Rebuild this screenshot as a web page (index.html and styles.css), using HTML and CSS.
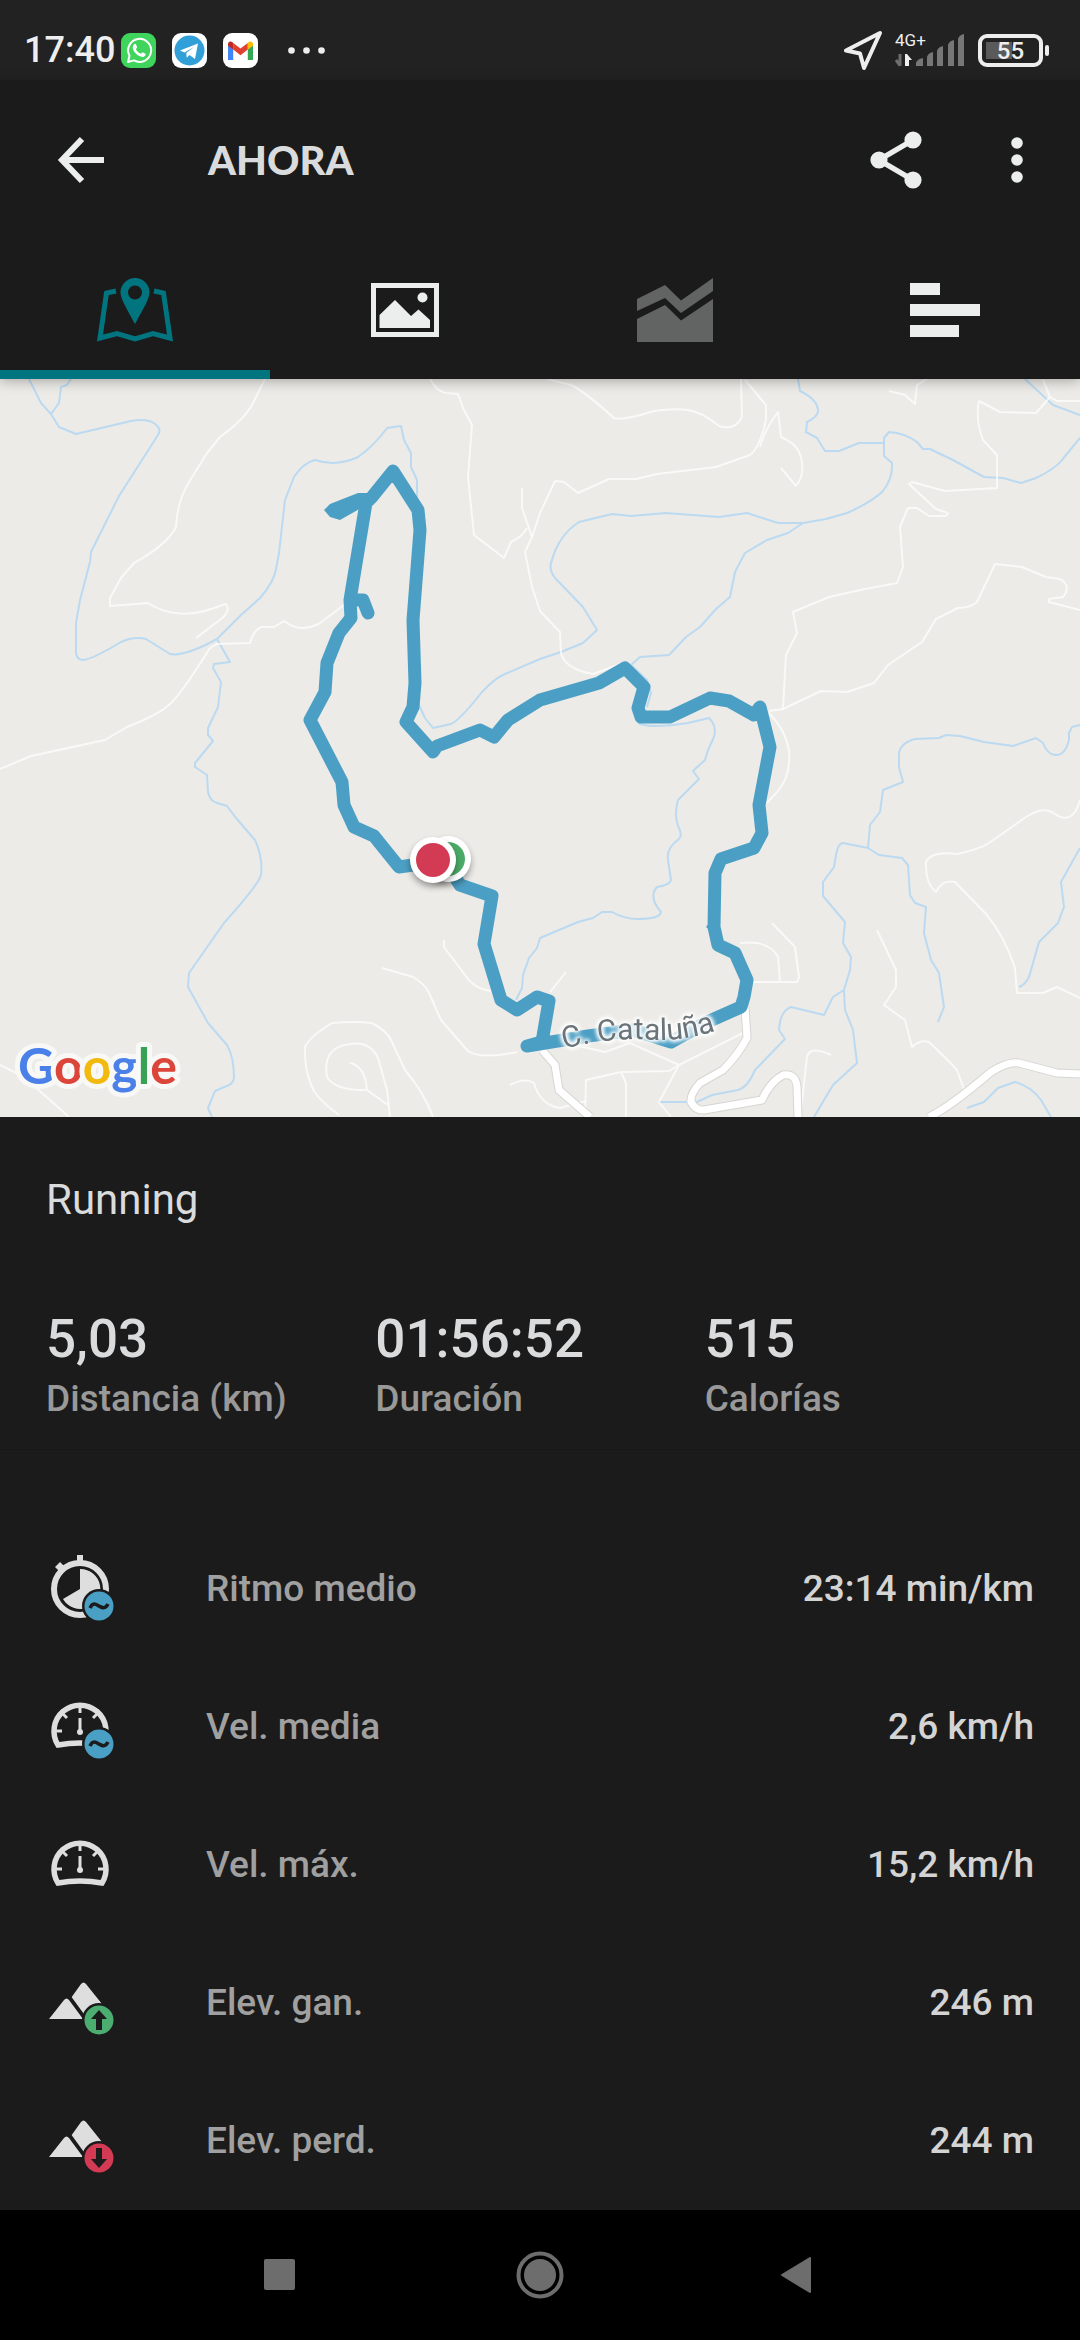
FILE: index.html
```html
<!DOCTYPE html>
<html lang="es">
<head>
  <meta charset="UTF-8" />
  <meta name="viewport" content="width=device-width, initial-scale=1">
  <title>Ahora - Running</title>
  <link rel="stylesheet" href="styles.css">
</head>
<body>

  <div class="status-bar">
    <span class="clock">17:40</span>
    <div class="notifications">
      <svg width="35" height="35" viewBox="0 0 35 35">
        <rect width="35" height="35" rx="9" fill="#3fd45c"/>
        <path d="M7 29l1.500-6.200A11.500 11.500 0 1 1 13 27.400z" fill="none" stroke="#fff" stroke-width="2" stroke-linejoin="round"/>
        <path d="M12.500 12c1-1.500 2-1.500 2.600-.3l1 2.400c.2.800-1.300 1.600-1 2.300 1 2 2.600 3.400 4.600 4.200.8.300 1.500-1.500 2.300-1.200l2.500 1.300c.8.600-.6 3-2.500 3.200-4.500.3-10.600-5.400-10.300-9.600.1-1 .4-1.700.8-2.300z" fill="#fff"/>
      </svg>
      <svg width="35" height="35" viewBox="0 0 35 35">
        <rect width="35" height="35" rx="9" fill="#fff"/>
        <circle cx="17.500" cy="17.500" r="15" fill="#32a0d8"/>
        <path d="M8 17.500L26 10.500l-3 15.500-5.500-4-2.800 2.700-.4-4.700L22 14l-9.500 5.500z" fill="#fff"/>
      </svg>
      <svg width="35" height="35" viewBox="0 0 35 35">
        <rect width="35" height="35" rx="9" fill="#fff"/>
        <path d="M5 12v15h5.200V16z" fill="#4285f4"/>
        <path d="M30 12v15h-5.200V16z" fill="#34a853"/>
        <path d="M10.200 10l7.300 5.500 7.300-5.500v6.600l-7.300 5.600-7.300-5.600z" fill="#e0402f"/>
        <path d="M5 12c-.3-4 3.300-4.500 5.200-2v6.600L5 12.700z" fill="#bc2a22"/>
        <path d="M30 12c.3-4-3.300-4.500-5.200-2v6.600l5.200-3.900z" fill="#fbbc04"/>
      </svg>
      <svg class="more-dots" width="37" height="7" viewBox="0 0 37 7">
        <circle cx="3.500" cy="3.500" r="3.300"/><circle cx="18.500" cy="3.500" r="3.300"/><circle cx="33.500" cy="3.500" r="3.300"/>
      </svg>
    </div>
    <div class="system">
      <svg width="40" height="40" viewBox="0 0 40 40">
        <path d="M3 20.500L37 3 21 38 17 23.500z" fill="none" stroke="#eee" stroke-width="4" stroke-linejoin="round"/>
      </svg>
      <div class="signal">
        <span class="network">4G+</span>
        <svg width="71" height="36" viewBox="0 0 71 36">
          <path d="M5 22v12M1 28l4 5.500" stroke="#6d6d6d" stroke-width="3" fill="none"/>
          <path d="M10 22h2l5 6h-3v6h-4z" fill="#eee"/>
          <path d="M21 31q1-4 7-5v8h-7zM32 25q1-4 6-5v14h-6zM42 19q1-4 6-5v20h-6zM53 13q1-4 6-5v26h-6zM63 7q1-4 6-5v32h-6z" fill="#777"/>
        </svg>
      </div>
      <div class="battery"><span>55</span></div>
    </div>
  </div>

  <header>
    <div class="app-bar">
      <button class="icon-btn" aria-label="Volver">
        <svg width="52" height="52" viewBox="0 0 52 52"><path d="M50 26H8M28 5L8 26l20 21" fill="none" stroke="#eceded" stroke-width="6"/></svg>
      </button>
      <h1>AHORA</h1>
      <button class="icon-btn" aria-label="Compartir">
        <svg width="52" height="60" viewBox="0 0 52 60">
          <path d="M43 10L9 30l34 20" fill="none" stroke="#eceded" stroke-width="5.500"/>
          <g fill="#eceded"><circle cx="43" cy="10" r="8.600"/><circle cx="9" cy="30" r="8.600"/><circle cx="43" cy="50" r="8.600"/></g>
        </svg>
      </button>
      <button class="icon-btn" aria-label="Más opciones">
        <svg width="12" height="48" viewBox="0 0 12 48"><g fill="#eceded"><circle cx="6" cy="7" r="5.800"/><circle cx="6" cy="24" r="5.800"/><circle cx="6" cy="41" r="5.800"/></g></svg>
      </button>
    </div>

    <nav class="tabs">
      <button class="tab active" aria-label="Mapa">
        <svg width="78" height="66" viewBox="0 0 78 66">
          <path d="M20 14l-9.500 2L4 61l17-4.500L39 62l18-5.500L74 61 67.500 16l-9.500-2" fill="none" stroke="#00757f" stroke-width="5"/>
          <path fill-rule="evenodd" d="M39 1a14.500 14.500 0 0 0-14.500 14.500C24.500 22 32 34 39 47c7-13 14.500-25 14.500-31.500A14.500 14.500 0 0 0 39 1zm0 7.500a7 7 0 1 1 0 14 7 7 0 0 1 0-14z" fill="#00757f"/>
        </svg>
      </button>
      <button class="tab" aria-label="Fotos">
        <svg width="68" height="54" viewBox="0 0 68 54">
          <rect x="2.500" y="2.500" width="63" height="49" fill="none" stroke="#eceded" stroke-width="5"/>
          <path d="M8.500 45V32L24 17l16 16 7.500-6.500L59 37v8z" fill="#eceded"/>
          <circle cx="51.500" cy="14.500" r="5" fill="#eceded"/>
        </svg>
      </button>
      <button class="tab" aria-label="Gráficas">
        <svg width="76" height="64" viewBox="0 0 76 64"><path d="M0 21L28 7l16 15.500L76 0v13L44 35 28 20 0 33zM0 41l28-14 16 15.500L76 21v43H0z" fill="#626463"/></svg>
      </button>
      <button class="tab" aria-label="Parciales">
        <svg width="70" height="54" viewBox="0 0 70 54"><path d="M0 0h30v12H0zM0 21h70v12H0zM0 42h49v12H0z" fill="#eceded"/></svg>
      </button>
    </nav>
  </header>

  <main>
    <svg class="map" viewBox="0 0 1080 738" role="img" aria-label="Mapa de la ruta">
      <!-- rivers -->
      <g class="river">
        <path d="M29 0L41 24 51 35 59 48 76 55 131 42Q148 39 155 45 162 50 158 56L119 117 91 173 90 183 80 221 76 244V274Q77 281 83 281 93 280 121 263 134 257 146 260L170 275Q184 278 217 260L241 236 260 219Q274 203 276 190L279 174 285 121 294 98Q303 84 315 81 336 88 358 78 374 67 387 49L401 47 404 61 411 74V88L417 101V121"/>
        <path d="M71 0L67 6 61 8 59 24 51 35"/>
        <path d="M217 260L230 283 214 285 213 289 221 303 218 328 208 349V356L213 362 195 384V388L207 396 208 413Q210 422 217 424L227 427 236 439 255 461Q263 478 261 496 259 505 224 544L189 594 188 608 208 644 227 666Q234 678 234 699 233 704 229 706L215 712 208 729 212 738"/>
        <path d="M418 324L425 339 433 349 451 345Q460 341 482 313 495 299 505 295L540 280 561 273 583 264 597 251 583 228 555 199Q548 190 552 181 559 156 579 143L612 135 631 137 666 134 719 138 747 134 778 144H803L826 140 847 134Q872 123 883 112 893 99 892 84L884 77V59L889 53Q905 54 917 63L923 70H930L953 81 984 98 1003 99 1021 104 1036 99Q1055 90 1062 81L1080 59"/>
        <path d="M803 144L788 154 767 161 745 174 735 193 730 218 716 230 700 248 686 258 669 276 640 278 631 286 647 301 651 314 647 328"/>
        <path d="M798 0L800 12Q817 20 818 31 819 37 807 43L806 53 817 59 825 72H839L859 64H884M1025 0L1053 26 1080 36"/>
        <path d="M638 344Q650 350 688 344L709 339Q717 347 714 358L708 371 705 381 693 392 699 400 678 421Q674 435 678 447 683 456 679 460 666 469 668 481L671 501Q670 506 657 508 648 518 661 533 660 540 638 540 624 540 612 533H602L593 539 578 543 540 559 537 569 529 579 523 596 522 609 516 621"/>
        <path d="M1080 346L1072 348 1069 354V361Q1065 377 1055 376 1047 375 1043 364L1036 359 1013 367 984 363 960 357 946 356 939 359 915 360Q900 364 899 375V388L903 403 883 411 880 433 870 446 868 469"/>
        <path d="M868 469L843 464Q838 464 836 476L834 488 823 503V517L845 543 843 564 851 578 850 591 844 611 845 631 853 651 857 684 833 706 814 738"/>
        <path d="M868 469L879 476 902 479 908 486 910 516 915 524 926 528 924 554 931 581 939 594 944 628 938 643"/>
        <path d="M844 611L833 618 824 636 791 628Q780 632 779 651L785 660 755 691Q748 708 738 711L712 716 697 723H659"/>
        <path d="M1080 469L1061 503 1064 528 1058 544 1039 563 1029 598Q1025 606 1019 608M967 729L984 723 998 709 1015 703Q1032 708 1041 721L1051 738"/>
      </g>

      <!-- paths and roads -->
      <g class="trail">
        <path d="M265 0L253 24Q245 40 220 58L207 74 189 103Q177 123 176 148 167 166 134 184L121 199 110 219V227L148 224Q172 240 205 232L226 225Q232 233 217 243L196 259"/>
        <path d="M0 390L31 377 105 361 127 348Q160 335 170 325 182 314 210 269L217 265 250 264Q254 250 262 248L274 248 284 242Q300 255 320 244L344 226"/>
        <path d="M430 0Q436 12 446 14L458 15 463 29 472 46 468 98 474 156 504 179 511 163Q522 158 527 149"/>
        <path d="M522 109V129L532 158 525 173 532 208 540 232 560 253 561 274Q565 290 593 295L623 284"/>
        <path d="M532 158L540 134 555 102 564 103 578 114Q598 105 609 100H636L657 95 716 88 750 76Q760 68 766 41V26L745 1"/>
        <path d="M547 0L571 6Q584 12 614 39 622 42 654 32 675 29 688 31 702 33 719 47 735 52 742 38L741 0M760 68Q765 50 778 33L781 58Q795 64 799 73 807 93 796 107L781 89"/>
        <path d="M889 12L905 16 915 25 917 6 927 0M1080 22H1057L1050 18 1043 1"/>
        <path d="M1050 18L1036 34 1000 33 979 22Q975 40 983 61L997 76V109L945 112 912 103 909 105 936 130 948 134 946 137H929L917 129H908L900 148 903 188 897 204 865 210 829 218 793 233 797 254 786 276 783 330 769 332"/>
        <path d="M1080 231L1049 223 1049 220 1063 218Q1072 207 1060 200L1046 198 1022 188 995 185 977 223Q970 229 958 229L936 240 922 263 888 286 874 304 847 313 821 312 783 330"/>
        <path d="M769 334Q785 350 789 371 791 397 778 412L767 424M382 589L413 598Q425 605 429 614L441 641 467 671Q478 681 517 673M444 561V568L465 596Q474 610 491 612"/>
        <path d="M339 736Q316 719 312 708 304 690 305 668 309 658 332 644 355 642 372 644 387 652 391 661L405 691Q425 715 433 738"/>
        <path d="M390 738L387 711 378 679Q370 662 350 665 322 668 327 698 336 712 367 711L388 726M367 711Q365 687 350 684M510 706Q525 698 534 704 540 726 560 729L586 722"/>
        <path d="M0 686L24 698 69 738M877 551L896 591V608L884 626 905 641 912 668Q920 660 929 663 950 683 957 691L965 713"/>
        <path d="M1080 619L1057 608 1043 614H1017L1015 589Q1004 556 986 535L955 503Q942 500 936 513 925 504 926 483 931 472 957 475 980 470 989 464L1026 438Q1044 426 1055 435 1073 447 1080 421"/>
        <path d="M772 544L795 568 799 598 797 603H750M740 564Q770 561 778 578L780 603M831 676Q810 666 807 678L801 731"/>
        <path d="M743 654L679 686 659 723 671 738M679 686L669 692 621 693 586 701 585 738M621 693L626 704V738M561 663L605 673 630 664 679 686M550 613L566 593"/>
      </g>
      <g class="road-edge">
        <path d="M745 628L747 659Q738 676 723 691L700 704Q690 715 691 723 696 732 704 731L762 721Q770 703 783 696 796 694 797 708L798 738M542 671L555 686 559 711 590 738M929 738Q950 728 991 693 1008 682 1019 684L1057 694 1080 695"/>
      </g>
      <g class="road">
        <path d="M745 628L747 659Q738 676 723 691L700 704Q690 715 691 723 696 732 704 731L762 721Q770 703 783 696 796 694 797 708L798 738M542 671L555 686 559 711 590 738M929 738Q950 728 991 693 1008 682 1019 684L1057 694 1080 695"/>
      </g>

      <!-- recorded route -->
      <path class="route" d="M455 498L460 506 492 517 484 565 501 621 517 631 537 618 549 622 542 663 527 667 588 657 633 651 671 663 705 644 741 628 744 618 747 601 735 574 718 566 714 548 715 494 721 480 754 469 762 454 759 426 770 368 760 328 754 336 729 322 710 319 670 338H641L638 329 644 308 625 289 599 304 540 321 508 341 494 358 480 351 437 367 433 373 406 343 413 328 415 304 413 241 420 151 418 131 393 92 372 118 366 124 350 221 351 239 339 254 327 284 325 313 310 341 342 403 344 426 354 448 374 457 399 488 420 485M350 221H363L368 234"/>
      <path class="route-fill" d="M324 131L330 125 358 114H374L370 124 340 141 330 138zM706 548L716 536 722 560zM534 659L550 650 548 668 528 673z"/>

      <path id="street" d="M564 670Q600 660 640 660 680 664 714 652" fill="none"/>
      <text class="street-name"><textPath href="#street">C. Cataluña</textPath></text>

      <g class="marker"><circle cx="448" cy="480" r="23" fill="#fff"/><circle cx="448" cy="480" r="17" fill="#4caa68"/></g>
      <g class="marker"><circle cx="433" cy="481" r="23" fill="#fff"/><circle cx="433" cy="481" r="17" fill="#d33b54"/></g>

      <text class="google" x="18" y="705"><tspan fill="#4a80e8">G</tspan><tspan fill="#dc4539">o</tspan><tspan fill="#f2b90f">o</tspan><tspan fill="#4a80e8">g</tspan><tspan fill="#37a255">l</tspan><tspan fill="#dc4539">e</tspan></text>
    </svg>

    <section class="summary">
      <h2>Running</h2>
      <dl class="totals">
        <div><dd>5,03</dd><dt>Distancia (km)</dt></div>
        <div><dd>01:56:52</dd><dt>Duración</dt></div>
        <div><dd>515</dd><dt>Calorías</dt></div>
      </dl>
    </section>

    <ul class="details">
      <li>
        <svg width="80" height="80" viewBox="0 0 80 80">
          <circle cx="40" cy="40" r="26" fill="none" stroke="#dedede" stroke-width="6"/>
          <path d="M37 6h6v7h-6zM15 18l5-5 4 4-5 5z" fill="#dedede"/>
          <path d="M40 40V20a20 20 0 1 1-17 30z" fill="#dedede"/>
          <circle cx="59" cy="57" r="17" fill="#1b1b1b"/><circle cx="59" cy="57" r="14.500" fill="#4a9fc5"/>
          <path d="M50 59c3-7 7-3 9-2s6 4 9-2" fill="none" stroke="#1b1b1b" stroke-width="3.500"/>
        </svg>
        <span class="name">Ritmo medio</span><span class="value">23:14 min/km</span>
      </li>
      <li>
        <svg width="80" height="80" viewBox="0 0 80 80">
          <path d="M18 58A26 26 0 1 1 62 58Q40 54 18 58z" fill="none" stroke="#dedede" stroke-width="5.500"/>
          <path d="M40 18v8M16 44h6M64 44h-6M23 27l4 4M57 27l-4 4M40 31v14" stroke="#dedede" stroke-width="3"/>
          <circle cx="40" cy="45" r="3" fill="#dedede"/>
          <circle cx="59" cy="57" r="17" fill="#1b1b1b"/><circle cx="59" cy="57" r="14.500" fill="#4a9fc5"/>
          <path d="M50 59c3-7 7-3 9-2s6 4 9-2" fill="none" stroke="#1b1b1b" stroke-width="3.500"/>
        </svg>
        <span class="name">Vel. media</span><span class="value">2,6 km/h</span>
      </li>
      <li>
        <svg width="80" height="80" viewBox="0 0 80 80">
          <path d="M18 58A26 26 0 1 1 62 58Q40 54 18 58z" fill="none" stroke="#dedede" stroke-width="5.500"/>
          <path d="M40 18v8M16 44h6M64 44h-6M23 27l4 4M57 27l-4 4M40 31v14" stroke="#dedede" stroke-width="3"/>
          <circle cx="40" cy="45" r="3" fill="#dedede"/>
        </svg>
        <span class="name">Vel. máx.</span><span class="value">15,2 km/h</span>
      </li>
      <li>
        <svg width="80" height="80" viewBox="0 0 80 80">
          <path d="M31 35L41 21q2.500-3 5 0L62 41 47 56zM9 56L24 37q2.500-3 5 0L43 56z" fill="#dedede"/>
          <path d="M30 34L46 56" stroke="#1b1b1b" stroke-width="2.500"/>
          <circle cx="59" cy="57" r="17" fill="#1b1b1b"/><circle cx="59" cy="57" r="14.500" fill="#4bad70"/>
          <path d="M59 47l8 9h-5v11h-6V56h-5z" fill="#1b1b1b"/>
        </svg>
        <span class="name">Elev. gan.</span><span class="value">246 m</span>
      </li>
      <li>
        <svg width="80" height="80" viewBox="0 0 80 80">
          <path d="M31 35L41 21q2.500-3 5 0L62 41 47 56zM9 56L24 37q2.500-3 5 0L43 56z" fill="#dedede"/>
          <path d="M30 34L46 56" stroke="#1b1b1b" stroke-width="2.500"/>
          <circle cx="59" cy="57" r="17" fill="#1b1b1b"/><circle cx="59" cy="57" r="14.500" fill="#d33b54"/>
          <path d="M59 67l8-9h-5V47h-6v11h-5z" fill="#1b1b1b"/>
        </svg>
        <span class="name">Elev. perd.</span><span class="value">244 m</span>
      </li>
    </ul>
  </main>

  <footer class="nav-bar">
    <button aria-label="Recientes"><svg width="48" height="48" viewBox="0 0 48 48"><rect x="8" y="8" width="31" height="31" rx="2"/></svg></button>
    <button aria-label="Inicio"><svg width="48" height="48" viewBox="0 0 48 48"><circle cx="24" cy="24" r="16"/><circle cx="24" cy="24" r="21.500" fill="none" stroke="#6d6d6d" stroke-width="4"/></svg></button>
    <button aria-label="Atrás"><svg width="48" height="48" viewBox="0 0 48 48"><path d="M6 24L34 7v34z" stroke="#6d6d6d" stroke-width="2" stroke-linejoin="round"/></svg></button>
  </footer>

</body>
</html>
```
FILE: styles.css
```css
* {
  box-sizing: border-box;
}

body {
  font-family: Roboto, sans-serif;
  background: #1b1b1b;
  color: #dadbdc;
  margin: 0;
}

h1, h2, ul, dl, dd {
  margin: 0;
  padding: 0;
}

svg {
  display: block;
  flex-shrink: 0;
}

button {
  background: none;
  border: none;
  padding: 0;
  display: flex;
  align-items: center;
  justify-content: center;
  cursor: pointer;
}

/* status bar */
.status-bar {
  display: flex;
  align-items: center;
  height: 80px;
  padding: 20px 30px 0 24px;
  background: #222;
  color: #eee;
}

.clock {
  width: 97px;
  font-size: 36px;
  font-weight: 500;
  line-height: 40px;
}

.notifications {
  display: flex;
  align-items: center;
  gap: 16px;
  flex: 1;
}

.more-dots {
  margin-left: 14px;
  fill: #eee;
}

.system {
  display: flex;
  align-items: center;
  gap: 12px;
}

.signal {
  position: relative;
}

.network {
  position: absolute;
  left: 0;
  top: 0;
  font-size: 17px;
  line-height: 17px;
}

.battery {
  position: relative;
  width: 65px;
  height: 33px;
  margin-right: 7px;
  border: 4px solid #eee;
  border-radius: 9px;
  background: linear-gradient(#5a5a5a, #5a5a5a) 4px 4px / 26px 17px no-repeat;
  font-size: 24px;
  font-weight: 500;
  line-height: 26px;
  text-align: center;
}

.battery::after {
  content: "";
  position: absolute;
  right: -10px;
  top: 7px;
  width: 4px;
  height: 11px;
  border-radius: 2px;
  background: #eee;
}

/* header */
header {
  position: relative;
  background: #1b1b1b;
  box-shadow: 0 2px 12px rgba(0, 0, 0, 0.3);
}

.app-bar {
  display: flex;
  align-items: center;
  height: 160px;
  padding: 0 57px 0 54px;
}

.app-bar h1 {
  flex: 1;
  margin-left: 102px;
  font-family: Lato, sans-serif;
  font-size: 40px;
  font-weight: 900;
  line-height: 48px;
}

.app-bar .icon-btn + .icon-btn {
  margin-left: 89px;
}

.tabs {
  display: grid;
  grid-template-columns: repeat(4, 1fr);
}

.tab {
  height: 139px;
  border-top: 9px solid transparent;
  border-bottom: 9px solid transparent;
}

.tab.active {
  border-bottom-color: #00757f;
}

/* map */
.map {
  width: 100%;
  height: auto;
  background: #ecebe7;
}

.map path {
  stroke-linejoin: round;
}

.river {
  fill: none;
  stroke: #bbdaf1;
  stroke-width: 2;
}

.trail {
  fill: none;
  stroke: rgba(255, 255, 255, 0.7);
  stroke-width: 2;
}

.road-edge {
  fill: none;
  stroke: #d6d5d2;
  stroke-width: 9;
}

.road {
  fill: none;
  stroke: #fff;
  stroke-width: 7;
}

.route {
  fill: none;
  stroke: #4c9fc4;
  stroke-width: 13;
  stroke-linecap: round;
}

.route-fill {
  fill: #4c9fc4;
}

.street-name {
  font-size: 30px;
  fill: #6b7479;
  filter: drop-shadow(0 0 2px #fff) drop-shadow(0 0 2px #fff) drop-shadow(0 0 1px #fff);
}

.marker {
  filter: drop-shadow(0 4px 3px rgba(0, 0, 0, 0.35));
}

.google {
  font-family: Lato, sans-serif;
  font-size: 50px;
  font-weight: 700;
  stroke: #f8f8f6;
  stroke-width: 10;
  stroke-linejoin: round;
  paint-order: stroke;
}

/* totals */
.summary {
  padding: 59px 46px 28px;
  border-bottom: 1px solid #171717;
}

.summary h2 {
  font-size: 42px;
  font-weight: 400;
  line-height: 48px;
}

.totals {
  display: grid;
  grid-template-columns: repeat(3, 1fr);
  margin-top: 85px;
}

.totals div {
  display: flex;
  flex-direction: column;
  gap: 8px;
}

.totals dd {
  font-size: 53px;
  font-weight: 500;
  line-height: 60px;
}

.totals dt {
  font-size: 37px;
  font-weight: 500;
  line-height: 44px;
  color: #999;
}

/* detail rows */
.details {
  list-style: none;
  padding-top: 70px;
}

.details li {
  display: flex;
  align-items: center;
  height: 138px;
  padding: 0 46px 0 40px;
  font-size: 37px;
  font-weight: 500;
  line-height: 44px;
}

.name {
  flex: 1;
  margin-left: 86px;
  color: #a0a0a0;
}

.value {
  color: #d4d4d4;
}

/* android buttons */
.nav-bar {
  display: flex;
  align-items: center;
  justify-content: center;
  gap: 212px;
  height: 130px;
  background: #000;
}

.nav-bar svg {
  fill: #6d6d6d;
}
```
